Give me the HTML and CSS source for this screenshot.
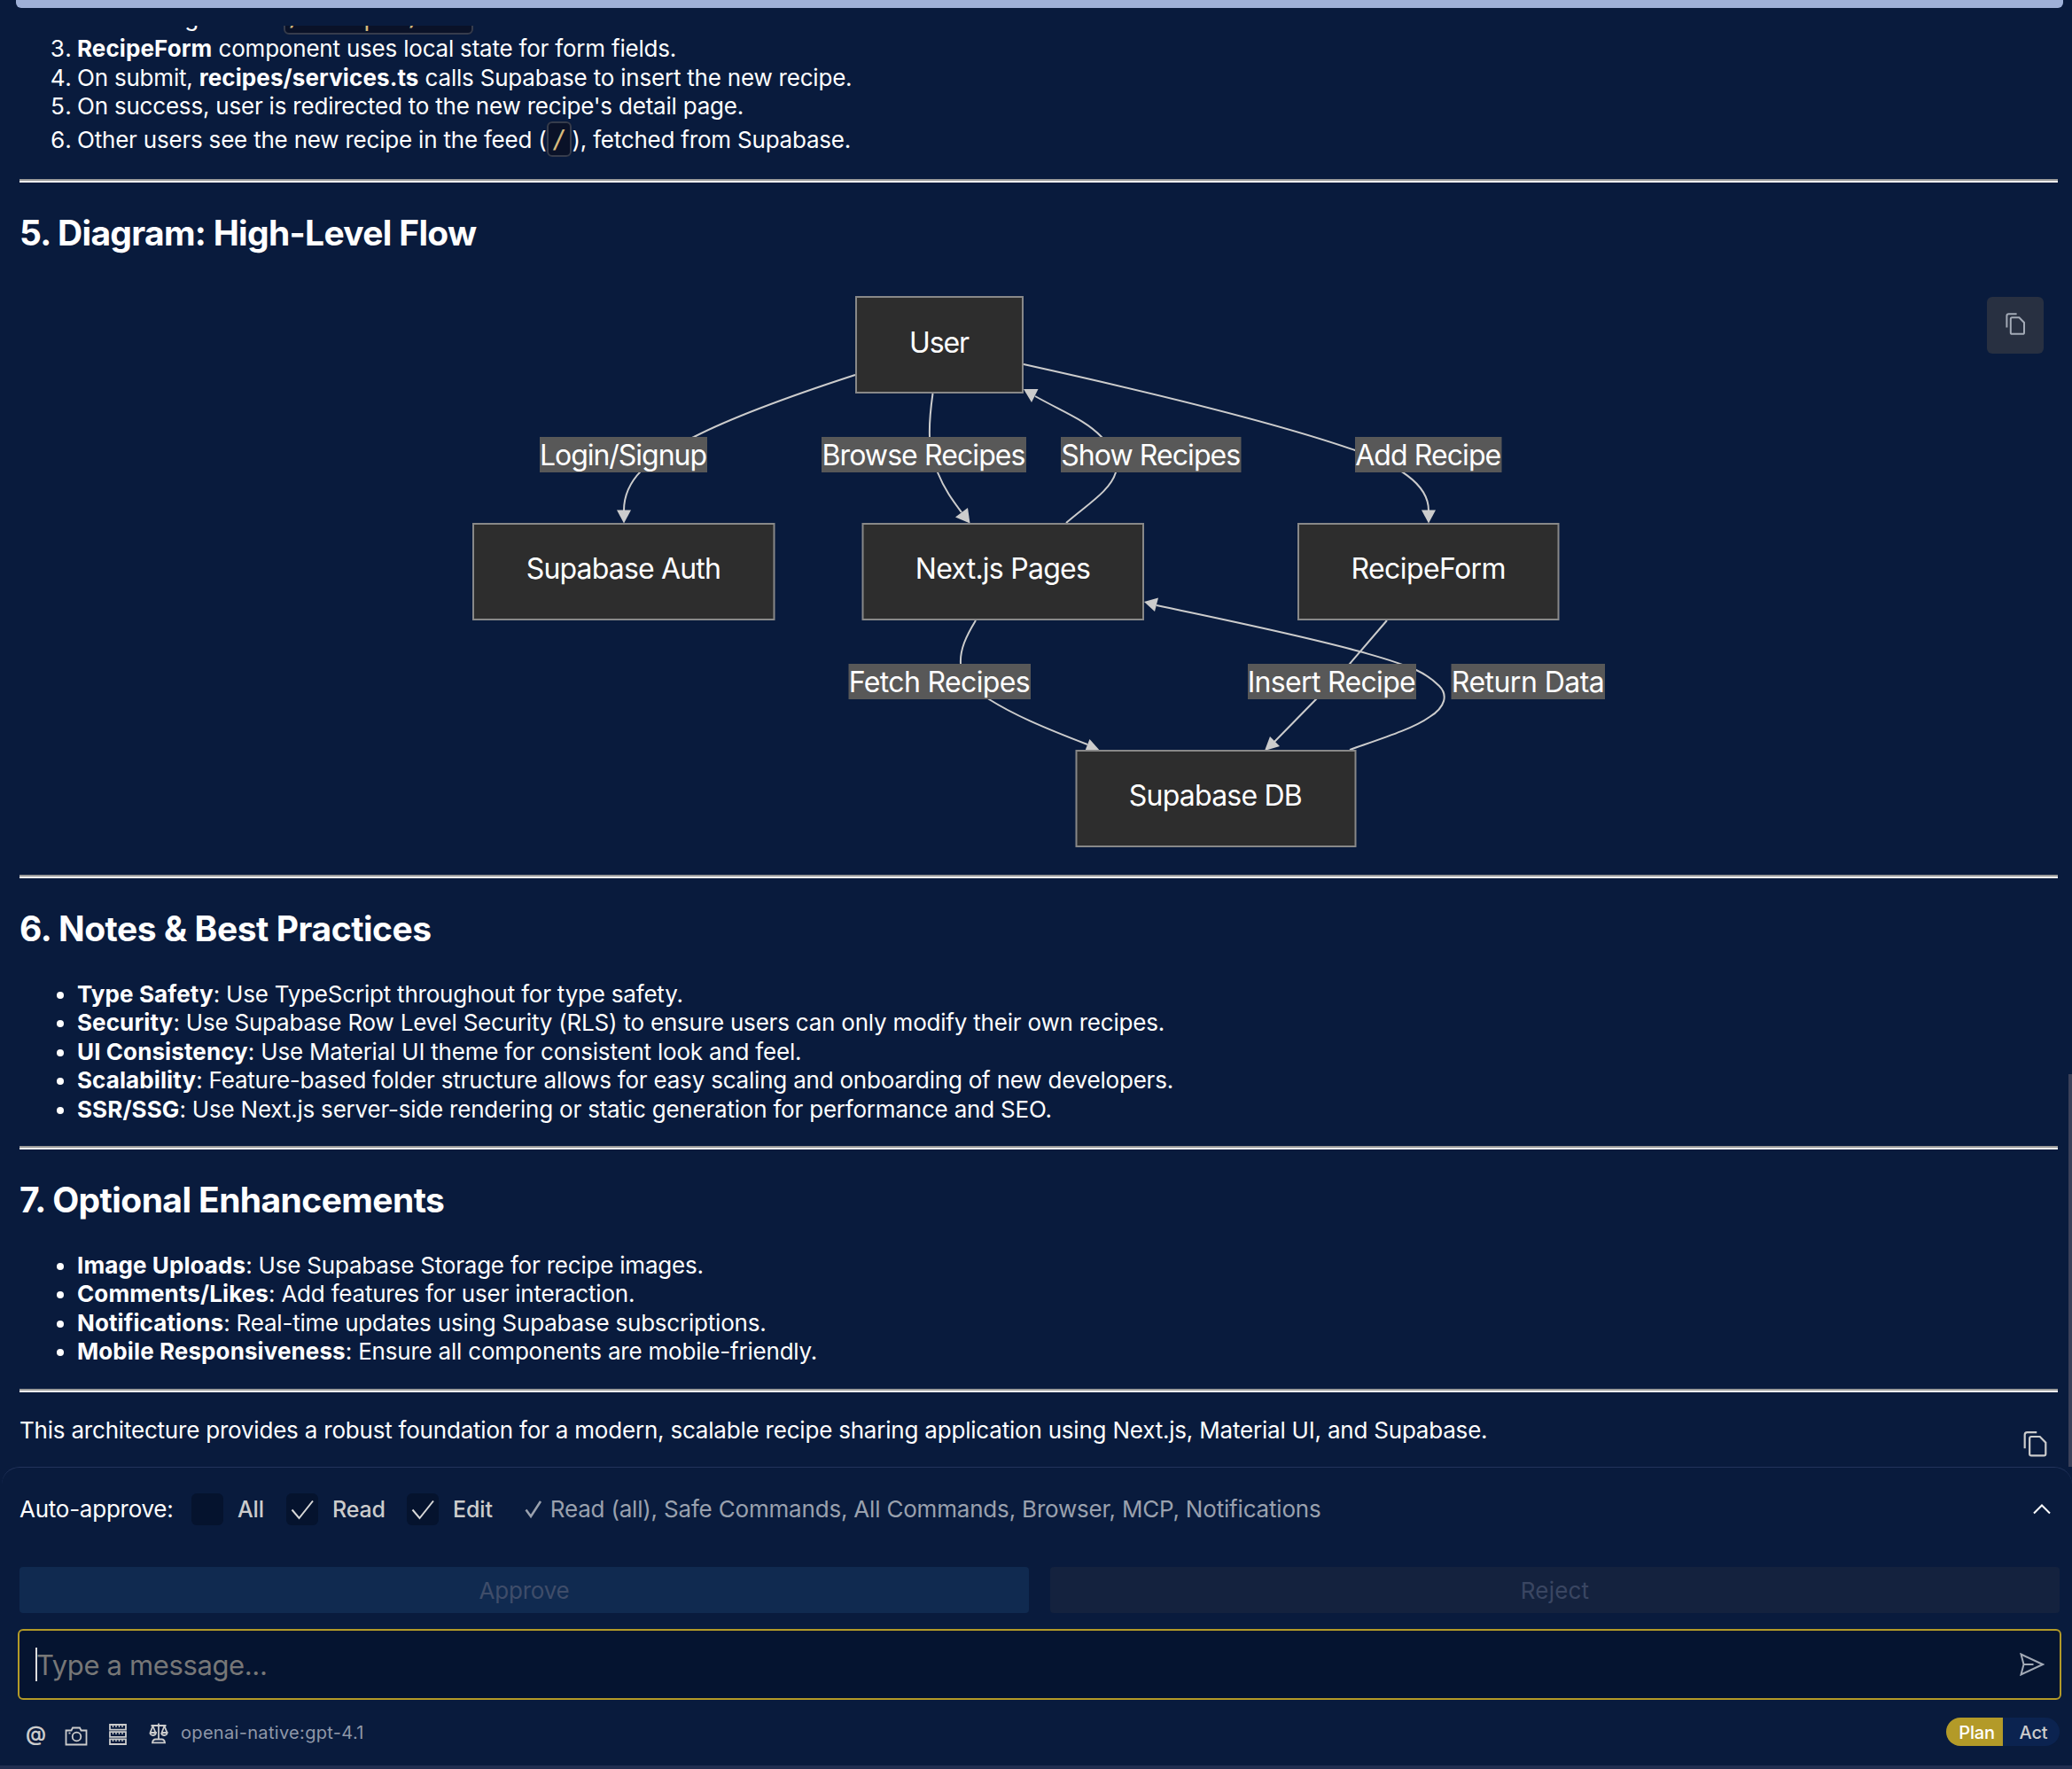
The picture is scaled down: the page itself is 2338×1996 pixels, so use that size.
FILE: index.html
```html
<!DOCTYPE html>
<html lang="en">
<head>
<meta charset="utf-8">
<title>Chat</title>
<link rel="stylesheet" href="styles.css">
</head>
<body>
<div class="app">
  <div class="topbar"></div>
  <main class="messages">
    <div class="content">
      <ol class="list" start="2">
        <li class="has-code"><span class="wide">User navigates to </span><code>/recipes/new</code>.</li>
        <li><b>RecipeForm</b> component uses local state for form fields.</li>
        <li>On submit, <b>recipes/services.ts</b> calls Supabase to insert the new recipe.</li>
        <li>On success, user is redirected to the new recipe's detail page.</li>
        <li class="has-code">Other users see the new recipe in the feed (<code>/</code>), fetched from Supabase.</li>
      </ol>
      <hr>
      <h2 class="tight">5. Diagram: High-Level Flow</h2>
      <div class="diagram">
        <svg class="flow" viewBox="22 287 2300 700" width="2300" height="700">
          <g class="edge">
            <path d="M965,423C885,449 820,474 783,493C730,518 704,542 704,576"/>
            <path d="M1052.5,444C1049.5,465 1048.5,480 1049,493C1049,505 1052,518 1058,533C1066,553 1076,566 1085,578"/>
            <path d="M1203,590C1230,567 1253,553 1259,533C1263,517 1252,503 1243,493C1225,474 1200,465 1168,447"/>
            <path d="M1155,411C1300,443 1440,477 1529,508C1575,524 1612,545 1612,576"/>
            <path d="M1101,700C1090,718 1083,733 1084,749C1084,765 1098,778 1116,789C1143,806 1175,820 1227,840"/>
            <path d="M1565,700L1523,749L1485,789L1438,837"/>
            <path d="M1523,846C1560,833 1595,822 1613,809C1631,798 1634,784 1624,774C1617,767 1609,761 1598,756C1575,746 1555,741 1534,735C1460,715 1380,699 1305,683"/>
          </g>
          <g class="tip">
            <path d="M696,575.5h16L704,590.5z"/>
            <path d="M1078,583.5L1092,573L1094.5,590.5z"/>
            <path d="M1155,439H1171.5L1164,454z"/>
            <path d="M1604,575.5h16L1612,590.5z"/>
            <path d="M1229.5,834L1224,848L1242,848z"/>
            <path d="M1433,831L1444,842L1427,847z"/>
            <path d="M1307,674.5L1303,690L1291,679z"/>
          </g>
          <g class="node">
            <rect x="966" y="335" width="188" height="108"/>
            <rect x="534" y="591" width="339.5" height="108"/>
            <rect x="973.5" y="591" width="316.5" height="108"/>
            <rect x="1465" y="591" width="293.5" height="108"/>
            <rect x="1214.5" y="847" width="315" height="108"/>
          </g>
          <g class="label-bg">
            <rect x="609" y="493" width="189" height="40"/>
            <rect x="927" y="493" width="231" height="40"/>
            <rect x="1197" y="493" width="203.5" height="40"/>
            <rect x="1529" y="493" width="165.5" height="40"/>
            <rect x="957.5" y="749" width="205.5" height="40"/>
            <rect x="1408" y="749" width="190" height="40"/>
            <rect x="1637.5" y="749" width="173.5" height="40"/>
          </g>
          <g class="text">
            <text x="1060" y="397.6" textLength="68">User</text>
            <text x="703.8" y="653" textLength="220">Supabase Auth</text>
            <text x="1131.8" y="653" textLength="198">Next.js Pages</text>
            <text x="1612" y="653" textLength="175">RecipeForm</text>
            <text x="1371.8" y="909" textLength="196">Supabase DB</text>
            <text x="703.5" y="525" textLength="189">Login/Signup</text>
            <text x="1042.5" y="525" textLength="230">Browse Recipes</text>
            <text x="1298.7" y="525" textLength="203">Show Recipes</text>
            <text x="1611.7" y="525" textLength="165">Add Recipe</text>
            <text x="1060.2" y="781" textLength="205">Fetch Recipes</text>
            <text x="1502.7" y="781" textLength="190">Insert Recipe</text>
            <text x="1724.3" y="781" textLength="173">Return Data</text>
          </g>
        </svg>
        <button class="copy-btn"><svg width="32" height="32" viewBox="0 0 16 16"><path d="M3.2 9.8V3.2Q3.2 2.1 4.3 2.1H8.8M5.4 4.9Q5.4 4.1 6.2 4.1H10.2L13 7V12.6Q13 13.4 12.2 13.4H6.2Q5.4 13.4 5.4 12.6z"/></svg></button>
      </div>
      <hr>
      <h2>6. Notes &amp; Best Practices</h2>
      <ul class="list">
        <li><b>Type Safety</b>: Use TypeScript throughout for type safety.</li>
        <li><b>Security</b>: Use Supabase Row Level Security (RLS) to ensure users can only modify their own recipes.</li>
        <li><b>UI Consistency</b>: Use Material UI theme for consistent look and feel.</li>
        <li><b>Scalability</b>: Feature-based folder structure allows for easy scaling and onboarding of new developers.</li>
        <li><b>SSR/SSG</b>: Use Next.js server-side rendering or static generation for performance and SEO.</li>
      </ul>
      <hr>
      <h2 class="snug">7. Optional Enhancements</h2>
      <ul class="list">
        <li><b>Image Uploads</b>: Use Supabase Storage for recipe images.</li>
        <li><b>Comments/Likes</b>: Add features for user interaction.</li>
        <li><b>Notifications</b>: Real-time updates using Supabase subscriptions.</li>
        <li><b>Mobile Responsiveness</b>: Ensure all components are mobile-friendly.</li>
      </ul>
      <hr>
      <p>This architecture provides a robust foundation for a modern, scalable recipe sharing application using Next.js, Material UI, and Supabase.</p>
    </div>
    <svg class="copy-icon" width="35" height="35" viewBox="0 0 16 16"><path d="M2.6 10.2V3.2Q2.6 1.9 3.9 1.9H8.8M5.1 5Q5.1 4.1 6 4.1H10.4L13.4 7.2V13Q13.4 13.9 12.5 13.9H6Q5.1 13.9 5.1 13z"/></svg>
    <div class="scrollbar"></div>
  </main>
  <footer class="composer">
    <div class="approve-row">
      <span class="title">Auto-approve:</span>
      <span class="check"></span><span class="opt opt-all">All</span>
      <span class="check"><svg width="36" height="36"><path d="M6.5 18.5L14.5 28L30 8.5"/></svg></span><span class="opt opt-read">Read</span>
      <span class="check"><svg width="36" height="36"><path d="M6.5 18.5L14.5 28L30 8.5"/></svg></span><span class="opt">Edit</span>
      <svg class="tick" width="20" height="22"><path d="M1.5 11.5L7 19L18 2"/></svg>
      <span class="summary">Read (all), Safe Commands, All Commands, Browser, MCP, Notifications</span>
      <svg class="chevron" width="20" height="12"><path d="M1 10.5L10 1.5L19 10.5"/></svg>
    </div>
    <div class="buttons">
      <button class="btn primary">Approve</button>
      <button class="btn secondary">Reject</button>
    </div>
    <div class="input">
      <span class="caret"></span><span class="placeholder">Type a message...</span>
      <svg class="send" width="28" height="26"><path d="M1.5 1.5L26 13L1.5 24.5L4.5 13z M4.5 13H15.5"/></svg>
    </div>
    <div class="toolbar">
      <span class="at">@</span>
      <svg class="camera" width="26" height="22"><path d="M1.5 4.5H7.5L9 1.5H17L18.5 4.5H24.5V20.5H1.5z"/><circle cx="13.5" cy="11.5" r="4.8"/><path d="M4.5 7.5H6.5"/></svg>
      <svg class="server" width="20" height="24"><path d="M1 1h18v5.6H1zM1 9.2h18v5.6H1zM1 17.4h18v5.6H1z"/><path class="teeth" d="M4.5 1v3M8 1v3M11.5 1v3M15 1v3M4.5 9v3M8 9v3M11.5 9v3M15 9v3M4.5 17v3M8 17v3M11.5 17v3M15 17v3"/></svg>
      <svg class="scales" width="22" height="24"><path d="M11 0.5V18M2.5 3H19.5M4.5 3.5L1.5 11M4.5 3.5L7.5 11M17.5 3.5L14.5 11M17.5 3.5L20.5 11M1.3 11H8Q7.5 14 4.6 14T1.3 11M14 11H20.7Q20.3 14 17.4 14T14 11M4 22.3H18Q17.5 18.5 14.5 18.5H7.5Q4.5 18.5 4 22.3z"/></svg>
      <span class="model">openai-native:gpt-4.1</span>
      <div class="mode"><span class="plan">Plan</span><span class="act">Act</span></div>
    </div>
    <div class="bottom-edge"></div>
  </footer>
</div>
</body>
</html>
```
FILE: styles.css
```css
* { box-sizing: border-box; }
html, body { margin: 0; height: 100%; }
body {
  background: #091b3d;
  color: #fff;
  font-family: Inter, "Liberation Sans", sans-serif;
  font-size: 26px;
  line-height: 32.5px;
  letter-spacing: -0.207px;
  overflow: hidden;
}
svg { display: block; flex: none; fill: none; }
button { border: 0; padding: 0; font: inherit; color: inherit; letter-spacing: inherit; }

.app { display: flex; flex-direction: column; height: 1996px; }
.topbar { flex: none; height: 9px; margin: 0 10px 20px 18px; background: #9fb1d8; border-radius: 0 0 6px 6px; }
.messages { position: relative; flex: none; height: 1626px; overflow: hidden; }
.content { margin-top: -30px; padding: 0 16px 0 22px; }

.list { margin: 0; padding-left: 65px; }
ul.list { list-style: none; }
ul.list li { position: relative; }
ul.list li::before {
  content: ""; position: absolute; left: -23px; top: 13px;
  width: 8px; height: 8px; border-radius: 50%; background: #fff;
}
.has-code { padding: 5px 0 2.7px; }
.wide { letter-spacing: 0.6px; }
b { font-weight: 700; letter-spacing: 0.1px; }
code {
  font: 28px/1 "DejaVu Sans Mono", monospace;
  letter-spacing: 0;
  color: #d7ba7d; background: #0a1228;
  border: 2px solid #363c4c; border-radius: 6px;
  padding: 2px 4px 1px;
}
hr { margin: 25px 0 27px; height: 4px; border: 0; border-top: 2px solid #9a9a9a; background: #eee; }
h2 { margin: 33.4px 0 32.4px; font-size: 39px; line-height: 48.75px; font-weight: 700; letter-spacing: -0.45px; }
h2.snug { letter-spacing: -0.58px; }
h2.tight { letter-spacing: -0.69px; }
p { margin: 0; }

.diagram { position: relative; height: 700px; margin: -33.4px 0 -25px; }
.flow { width: 2300px; height: 700px; }
.edge { stroke: #ccc; stroke-width: 2; }
.tip { fill: #ccc; }
.node { fill: #2d2d2d; stroke: #888; stroke-width: 2; }
.label-bg { fill: #585858; }
.text { fill: #fff; font-size: 32px; letter-spacing: 0; text-anchor: middle; }
.copy-btn {
  position: absolute; top: 48px; right: 16px; width: 64px; height: 64px; padding-bottom: 2px;
  display: grid; place-items: center; background: #283041; border-radius: 6px;
}
.copy-btn path { stroke: #a3aab6; stroke-width: 1; }
.copy-icon { position: absolute; left: 2279px; bottom: 8px; }
.copy-icon path { stroke: #ccc; stroke-width: 1; }
.scrollbar { position: absolute; right: 0; bottom: 0; width: 4px; height: 443px; background: #3a4058; }

.composer { flex: 1; display: flex; flex-direction: column; }
.approve-row {
  display: flex; align-items: center; height: 95px; margin: 0 0 18px 2px; padding: 0 24px 1px 20px;
  border-top: 1px solid #22335a; border-radius: 20px 20px 0 0;
}
.title, .opt, .summary { padding-top: 2px; }
.title { width: 174px; letter-spacing: -0.25px; white-space: nowrap; }
.check { width: 36px; height: 36px; margin-left: 20px; background: #05132e; border-radius: 6px; }
.check path { stroke: #d8d8d8; stroke-width: 2; }
.opt { margin-left: 16px; color: #ccc; font-size: 25px; font-weight: 500; letter-spacing: -0.15px; }
.opt-all { width: 35px; }
.opt-read { width: 64px; }
.tick { margin-left: 36px; }
.tick path { stroke: #9aa1ae; stroke-width: 2.5; }
.summary { margin-left: 9px; color: #9aa1ae; letter-spacing: -0.19px; }
.chevron { margin-left: auto; }
.chevron path { stroke: #fff; stroke-width: 2; }

.buttons { display: grid; grid-template-columns: 1fr 1fr; gap: 24px; height: 52px; margin: 0 14px 18px 22px; }
.btn { padding-top: 2px; border-radius: 4px; color: #3f4d6a; }
.primary { background: #102a50; }
.secondary { background: #14223e; color: #3a4662; letter-spacing: 0.2px; }

.input {
  display: flex; align-items: center; height: 80px; margin: 0 12px 20px 20px; padding: 0 17px 0 18px;
  background: #051430; border: 2px solid #b39a28; border-radius: 6px;
}
.caret { width: 2px; height: 38px; background: #ddd; }
.placeholder { margin-left: -1px; padding-top: 2px; font-size: 31px; color: #777; letter-spacing: -0.36px; }
.send { margin-left: auto; }
.send path { stroke: #a3aab6; stroke-width: 2; }

.toolbar { display: flex; align-items: center; height: 32px; margin: 0 14px 22px 29px; }
.toolbar path, .toolbar circle { stroke: #ccc; stroke-width: 1.8; }
.toolbar .teeth { stroke-width: 1.4; }
.at { width: 22px; padding-top: 4px; color: #ccc; font-size: 23px; font-weight: 600; }
.camera { margin: 9px 0 0 22px; }
.server { margin: 5px 0 0 24px; }
.scales { margin: 4px 0 0 25px; }
.model { margin-left: 14px; padding-top: 2px; font-size: 20px; color: #8f97a8; letter-spacing: 0.32px; }
.mode { display: flex; margin-left: auto; height: 32px; font-size: 20px; line-height: 34px; border-radius: 16px; overflow: hidden; background: #0b2350; }
.plan { width: 64px; text-align: center; background: #b39a28; font-weight: 500; padding-left: 5px; }
.act { width: 64px; text-align: center; color: #ccc; font-weight: 500; padding-left: 5px; }
.bottom-edge { height: 4px; background: #212e50; }
```
